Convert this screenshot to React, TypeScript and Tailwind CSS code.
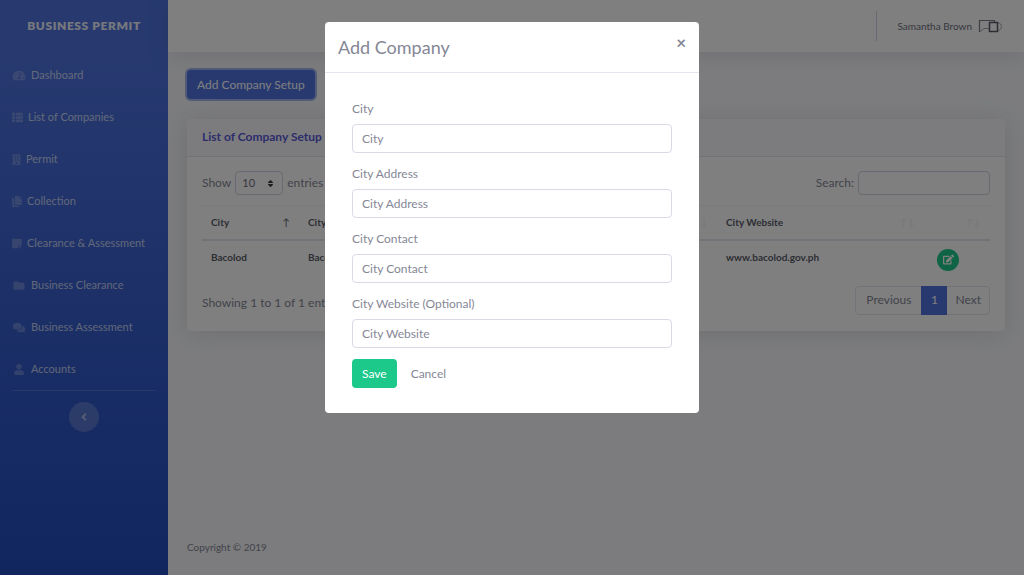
import { useState } from 'react';
import {
  FaAngleLeft,
  FaBuilding,
  FaComments,
  FaCopy,
  FaEdit,
  FaFolder,
  FaSort,
  FaStickyNote,
  FaTachometerAlt,
  FaThList,
  FaUser,
} from 'react-icons/fa';

const navItems = [
  { label: 'Dashboard', icon: FaTachometerAlt, iconWidth: 'w-3.5' },
  { label: 'List of Companies', icon: FaThList, iconWidth: 'w-[11px]' },
  { label: 'Permit', icon: FaBuilding, iconWidth: 'w-[9px]' },
  { label: 'Collection', icon: FaCopy, iconWidth: 'w-2.5' },
  { label: 'Clearance & Assessment', icon: FaStickyNote, iconWidth: 'w-2.5' },
  { label: 'Business Clearance', icon: FaFolder, iconWidth: 'w-3.5' },
  { label: 'Business Assessment', icon: FaComments, iconWidth: 'w-3.5' },
  { label: 'Accounts', icon: FaUser, iconWidth: 'w-3.5' },
];

const columns = [
  { label: 'City', width: 'w-[97px]' },
  { label: 'City Address', width: '' },
  { label: 'City Contact', width: '' },
  { label: 'City Website', width: 'w-[207px]' },
  { label: '', width: 'w-[66px]' },
];

const companies = [
  { city: 'Bacolod', address: 'Bacolod City', contact: '', website: 'www.bacolod.gov.ph' },
];

const fields = [
  { id: 'city', label: 'City', placeholder: 'City' },
  { id: 'address', label: 'City Address', placeholder: 'City Address' },
  { id: 'contact', label: 'City Contact', placeholder: 'City Contact' },
  { id: 'website', label: 'City Website (Optional)', placeholder: 'City Website' },
];

function Sidebar() {
  return (
    <aside className="flex w-42 shrink-0 flex-col bg-linear-to-b from-[#4e73df] from-10% to-[#224abe]">
      <a
        href="#"
        className="flex h-13 items-center justify-center text-[12px] font-extrabold tracking-wider text-white/90 uppercase"
      >
        Business Permit
      </a>
      <nav className="flex flex-col pt-0.5">
        {navItems.map(({ label, icon: Icon, iconWidth }) => (
          <a key={label} href="#" className="flex h-[42px] items-center gap-[5px] pl-3 text-[11px] text-white/70">
            <Icon className={`h-[11px] text-white/25 ${iconWidth}`} />
            <span>{label}</span>
          </a>
        ))}
      </nav>
      <hr className="mx-3 border-white/15" />
      <button
        type="button"
        aria-label="Collapse sidebar"
        className="mt-[11px] flex size-[30px] items-center justify-center self-center rounded-full bg-white/20 text-[12px] text-white/50"
      >
        <FaAngleLeft />
      </button>
    </aside>
  );
}

function Topbar() {
  return (
    <header className="flex h-13 items-center justify-end bg-white pr-[22px] shadow-[0_2px_22px_rgba(58,59,69,0.15)]">
      <div className="h-[30px] border-l border-[#d1d3e2]" />
      <a href="#" className="ml-5 flex items-center gap-1.5 text-[10px] text-[#6e707e]">
        <span>Samantha Brown</span>
        <svg viewBox="0 0 24 16" className="h-4 w-6" fill="none" stroke="#7d7f8b">
          <path d="M1.500 14V2.500h15V5" strokeWidth="1.200" />
          <path d="M2 13.500l4-3h5" strokeWidth="1" opacity="0.7" />
          <rect x="11.500" y="4.500" width="8" height="9" stroke="#5a5c69" strokeWidth="1.500" />
          <path d="M20 4.500q3.500 1 3.500 4t-3.500 4.500" strokeWidth="1" opacity="0.6" />
        </svg>
      </a>
    </header>
  );
}

function CompanyTable() {
  return (
    <table className="mt-2.5 w-full table-fixed border-t border-[#f4f5fa] text-left text-[10px] leading-4 text-[#5a5c69]">
      <thead>
        <tr className="h-[34px] border-b-2 border-[#e3e6f0]">
          {columns.map((column, index) => (
            <th key={column.label} className={`px-[9px] font-bold ${column.width}`}>
              <span className="flex justify-between">
                {column.label}
                <span className={index === 0 ? 'font-normal' : 'ml-auto font-normal opacity-10'}>
                  {index === 0 ? '↑' : '↑↓'}
                </span>
              </span>
            </th>
          ))}
        </tr>
      </thead>
      <tbody>
        {companies.map((company) => (
          <tr key={company.city} className="align-top font-bold">
            <td className="px-[9px] py-2">{company.city}</td>
            <td className="px-[9px] py-2">{company.address}</td>
            <td className="px-[9px] py-2">{company.contact}</td>
            <td className="px-[9px] py-2">{company.website}</td>
            <td className="px-[9px] py-2">
              <button
                type="button"
                aria-label="Edit company"
                className="ml-1 flex size-[22px] items-center justify-center rounded-full bg-[#1cc88a] text-[11px] text-white"
              >
                <FaEdit />
              </button>
            </td>
          </tr>
        ))}
      </tbody>
    </table>
  );
}

function CompanyCard() {
  return (
    <section className="mt-5 rounded-sm bg-white shadow-[0_2px_22px_rgba(58,59,69,0.15)]">
      <h2 className="flex h-[38px] items-center rounded-t-sm border-b border-[#e3e6f0] bg-[#f8f9fc] px-[15px] pb-0.5 text-[12px] font-bold text-[#5a5ad8]">
        List of Company Setup
      </h2>
      <div className="px-[15px] pt-3.5 pb-4">
        <div className="flex h-6 items-center justify-between">
          <label className="flex items-center gap-1">
            Show
            <span className="relative flex items-center">
              <select className="h-6 w-12 appearance-none rounded-sm border border-[#d1d3e2] bg-white pl-1.5 text-[11px] text-[#6e707e]">
                <option>10</option>
                <option>25</option>
              </select>
              <FaSort className="pointer-events-none absolute right-2 text-[9px] text-[#3a3b45]" />
            </span>
            entries
          </label>
          <label className="flex items-center gap-1">
            Search:
            <input type="search" className="h-6 w-[132px] rounded-sm border border-[#d1d3e2] px-2 text-[11px]" />
          </label>
        </div>
        <CompanyTable />
        <div className="mt-[7px] flex items-center justify-between">
          <p className="pt-1.5">Showing 1 to 1 of 1 entries</p>
          <nav className="flex h-[29px] rounded-sm border border-[#e3e6f0]">
            <button type="button" className="px-2.5">
              Previous
            </button>
            <button type="button" className="-my-px w-[26px] bg-[#4e73df] text-white">
              1
            </button>
            <button type="button" className="px-2">
              Next
            </button>
          </nav>
        </div>
      </div>
    </section>
  );
}

function AddCompanyModal({ onClose }: { onClose: () => void }) {
  return (
    <div className="fixed inset-0 overflow-y-auto bg-black/50 pt-[22px]">
      <div
        role="dialog"
        aria-modal="true"
        aria-labelledby="modal-title"
        className="mx-auto max-w-[374px] rounded-sm bg-white"
      >
        <div className="flex h-[51px] items-start justify-between border-b border-[#e3e6f0] px-[13px] pt-[11px]">
          <h1 id="modal-title" className="text-[18px] leading-7">
            Add Company
          </h1>
          <button type="button" aria-label="Close" onClick={onClose} className="text-[17px] leading-5 font-bold">
            ×
          </button>
        </div>
        <form className="px-[27px] pt-[26px] pb-[25px]" onSubmit={(event) => event.preventDefault()}>
          {fields.map((field) => (
            <div key={field.id} className="mb-[11px]">
              <label htmlFor={field.id} className="mb-[5px] block leading-5">
                {field.label}
              </label>
              <input
                id={field.id}
                type="text"
                placeholder={field.placeholder}
                className="block h-[29px] w-full rounded-sm border border-[#d8dae6] px-[9px] text-[#6e707e] placeholder:text-[#858796]"
              />
            </div>
          ))}
          <div className="flex gap-1">
            <button type="submit" className="h-[29px] rounded-sm bg-[#1cc88a] px-2.5 text-white">
              Save
            </button>
            <button type="button" onClick={onClose} className="h-[29px] px-2.5">
              Cancel
            </button>
          </div>
        </form>
      </div>
    </div>
  );
}

export default function App() {
  const [isModalOpen, setIsModalOpen] = useState(true);

  return (
    <div className="flex min-h-screen bg-[#f8f9fc] font-[Lato,'Open_Sans',sans-serif] text-[12px] text-[#858796]">
      <Sidebar />
      <div className="flex min-w-0 flex-1 flex-col">
        <Topbar />
        <main className="flex-1 px-[19px] pt-[18px]">
          <button
            type="button"
            onClick={() => setIsModalOpen(true)}
            className="block h-[29px] rounded-sm bg-[#4e73df] px-2.5 text-white ring-2 ring-[#4e73df]/50"
          >
            Add Company Setup
          </button>
          <CompanyCard />
        </main>
        <footer className="flex h-14 items-center px-[19px] text-[10px]">Copyright © 2019</footer>
      </div>
      {isModalOpen ? <AddCompanyModal onClose={() => setIsModalOpen(false)} /> : null}
    </div>
  );
}
